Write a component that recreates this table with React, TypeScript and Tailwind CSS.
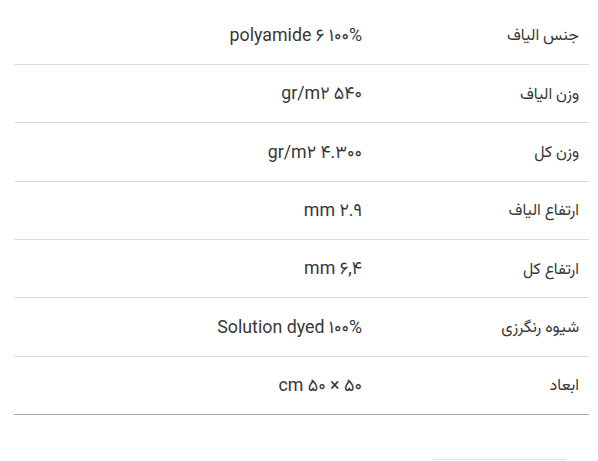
import React from 'react';

type Spec = { label: string; value: string };

// product specification rows (value column is read left to right)
const specs: Spec[] = [
  { label: 'جنس الیاف', value: 'polyamide ۶ ۱۰۰%' },
  { label: 'وزن الیاف', value: 'gr/m۲ ۵۴۰' },
  { label: 'وزن کل', value: 'gr/m۲ ۴.۳۰۰' },
  { label: 'ارتفاع الیاف', value: 'mm ۲.۹' },
  { label: 'ارتفاع کل', value: 'mm ۶,۴' },
  { label: 'شیوه رنگرزی', value: 'Solution dyed ۱۰۰%' },
  { label: 'ابعاد', value: 'cm ۵۰ × ۵۰' },
];

const App: React.FC = () => {
  return (
    <div className="w-[598px] h-[461px] bg-white overflow-hidden font-['Roboto','Vazirmatn','Noto_Sans_Arabic','DejaVu_Sans',sans-serif] text-[16px] text-[#383838]">
      <div dir="rtl" className="ml-[14px] mr-[9px] mt-[5.7px] border-b border-[#a9a9a9]">
        {specs.map((spec, i) => (
          <div
            key={spec.label}
            className={`flex items-center h-[58.33px] ${i > 0 ? 'border-t border-[#dcdcdc]' : ''}`}
          >
            <div className="w-[217px] pr-[10px] text-right">{spec.label}</div>
            <div className="flex-1 pr-[10px] text-right text-[17.8px]">
              <span dir="ltr">{spec.value}</span>
            </div>
          </div>
        ))}
      </div>

      {/* top edge of the box below the table */}
      <div className="flex justify-end mt-[44px] pr-[32px]">
        <div className="w-[133px] h-[20px] border-t border-[#e3e3e3] shadow-[0_-1px_2px_rgba(0,0,0,0.04)]" />
      </div>
    </div>
  );
};

export default App;
